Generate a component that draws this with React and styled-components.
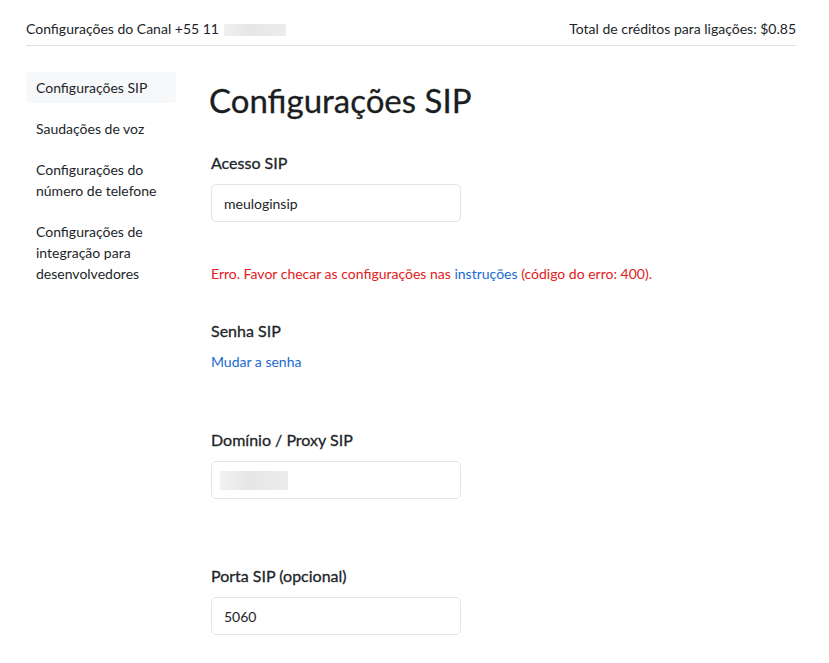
import React from "react";
import styled, { createGlobalStyle } from "styled-components";

const Global = createGlobalStyle`
  html, body { margin: 0; padding: 0; background: #fff; }
  body {
    font-family: "Lato", "Noto Sans", sans-serif;
    color: #212529;
  }
  * { box-sizing: border-box; }
`;

const Page = styled.div`
  padding: 0 33px 0 26px;
`;

const Header = styled.header`
  display: flex;
  justify-content: space-between;
  align-items: center;
  height: 46px;
  padding-top: 12px;
  border-bottom: 1px solid #dee2e6;
  font-size: 14px;
  line-height: 21px;
`;

const Blur = styled.span`
  display: inline-block;
  width: ${p => p.$w}px;
  height: ${p => p.$h}px;
  margin-left: ${p => p.$ml || 0}px;
  vertical-align: middle;
  background: linear-gradient(90deg, #f1f1f1, #e6e6e6 40%, #ececec);
  border-radius: 1px;
`;

const Body = styled.div`
  display: flex;
  gap: 33px;
  padding-top: 26px;
`;

const Sidebar = styled.nav`
  width: 150px;
  flex-shrink: 0;
  display: flex;
  flex-direction: column;
  gap: 10px;
`;

const NavItem = styled.div`
  padding: 5px 10px;
  font-size: 14px;
  line-height: 21px;
  color: #212529;
  border-radius: 4px;
  background: ${p => (p.$active ? "#f7f8f9" : "transparent")};
`;

const Main = styled.main`
  flex: 1;
`;

const Title = styled.h1`
  margin: 9px 0 0 0;
  font-size: 33px;
  font-weight: 400;
  line-height: 38px;
  color: #1b1e21;
  -webkit-text-stroke: 0.3px #1b1e21;
`;

const Section = styled.div`
  margin-top: ${p => p.$mt}px;
  padding-left: 2px;
`;

const Label = styled.div`
  font-size: 16px;
  line-height: 24px;
  font-weight: 400;
  color: #212529;
  -webkit-text-stroke: 0.3px #212529;
`;

const Input = styled.div`
  margin-top: 9px;
  width: 250px;
  height: 38px;
  border: 1px solid #e3e6e9;
  border-radius: 5px;
  padding: 0 ${p => p.$pl || 12}px;
  display: flex;
  align-items: center;
  font-size: 14px;
  color: #212529;
`;

const ErrorText = styled.div`
  font-size: 14px;
  line-height: 21px;
  color: #e12020;
`;

const Link = styled.a`
  color: #1a6bcf;
  text-decoration: none;
  font-size: 14px;
  line-height: 21px;
`;

const LinkLine = styled.div`
  margin-top: 8px;
  font-size: 14px;
  line-height: 21px;
`;

export default function App() {
  return (
    <>
      <Global />
      <Page>
        <Header>
          <span>
            Configurações do Canal +55 11
            <Blur $w={62} $h={12} $ml={5} />
          </span>
          <span>Total de créditos para ligações: $0.85</span>
        </Header>
        <Body>
          <Sidebar>
            <NavItem $active>Configurações SIP</NavItem>
            <NavItem>Saudações de voz</NavItem>
            <NavItem>Configurações do número de telefone</NavItem>
            <NavItem>Configurações de integração para desenvolvedores</NavItem>
          </Sidebar>
          <Main>
            <Title>Configurações SIP</Title>
            <Section $mt={32}>
              <Label>Acesso SIP</Label>
              <Input>meuloginsip</Input>
            </Section>
            <Section $mt={41}>
              <ErrorText>
                Erro. Favor checar as configurações nas <Link href="#">instruções</Link> (código do erro: 400).
              </ErrorText>
            </Section>
            <Section $mt={35}>
              <Label>Senha SIP</Label>
              <LinkLine>
                <Link href="#">Mudar a senha</Link>
              </LinkLine>
            </Section>
            <Section $mt={56}>
              <Label>Domínio / Proxy SIP</Label>
              <Input $pl={8}>
                <Blur $w={68} $h={19} />
              </Input>
            </Section>
            <Section $mt={65}>
              <Label>Porta SIP (opcional)</Label>
              <Input>5060</Input>
            </Section>
          </Main>
        </Body>
      </Page>
    </>
  );
}
